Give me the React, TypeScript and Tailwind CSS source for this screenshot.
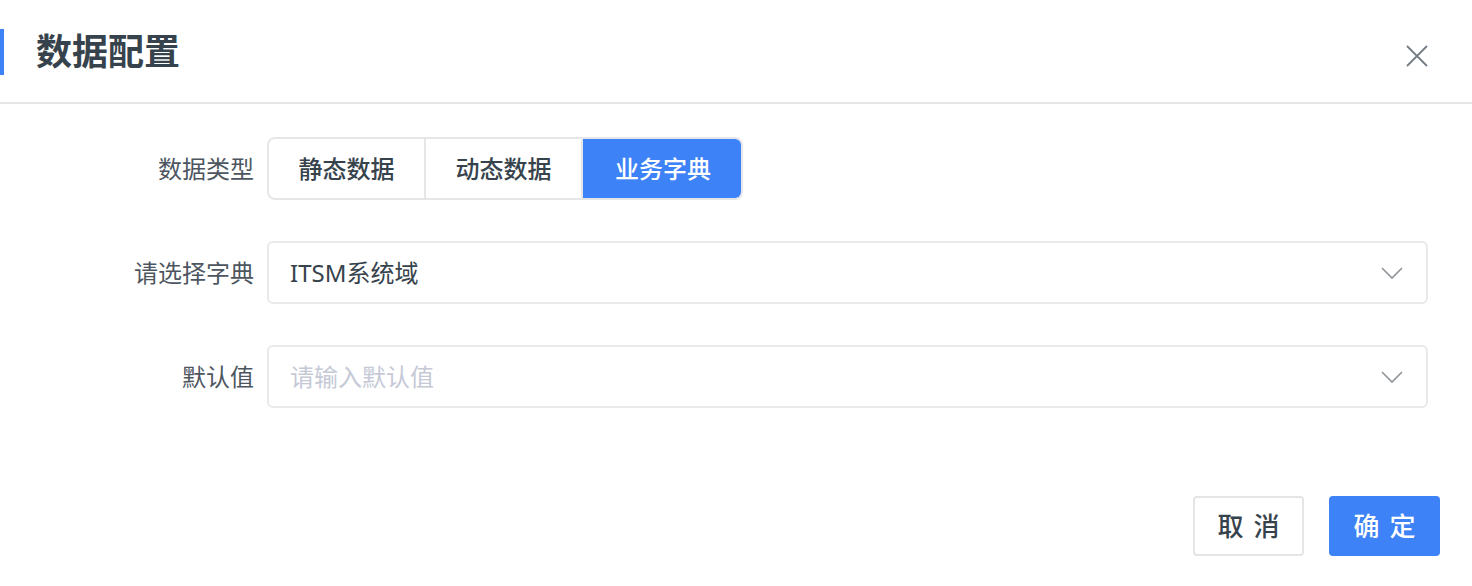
import { useState } from "react";

const types = ["静态数据", "动态数据", "业务字典"];

function Chevron() {
    return (
        <svg width="24" height="14" viewBox="0 0 24 14" fill="none" className="shrink-0">
            <path d="M2 2l10 10 10-10" stroke="#8f959c" strokeWidth="1.6" />
        </svg>
    );
}

function Row({ label, children }: { label: string; children: React.ReactNode }) {
    return (
        <div className="flex items-center gap-[13px]">
            <div className="w-[254px] text-right text-[24px] text-[#4d565f]">{label}</div>
            {children}
        </div>
    );
}

export default function App() {
    const [active, setActive] = useState(2);

    return (
        <div
            className="w-[1472px] h-[586px] bg-white flex flex-col"
            style={{ fontFamily: '"Noto Sans", "Noto Sans CJK SC", sans-serif' }}
        >
            <div className="h-[104px] border-b-2 border-[#e6e6e6] flex items-center pr-[44px]">
                <div className="w-[4px] h-[46px] bg-[#3d82f6] mr-[32px] mt-[2px]" />
                <h2 className="text-[36px] font-bold text-[#37434c] flex-1 mt-[2px]">数据配置</h2>
                <button className="text-[#747c85] mt-[9px]">
                    <svg width="22" height="22" viewBox="0 0 22 22">
                        <path d="M1 1l20 20M21 1L1 21" stroke="currentColor" strokeWidth="1.8" />
                    </svg>
                </button>
            </div>

            <div className="flex flex-col gap-[41px] pt-[33px] pr-[44px]">
                <Row label="数据类型">
                    <div className="flex h-[63px] rounded-[8px] border-2 border-[#e5e6e8] overflow-hidden">
                        {types.map((t, i) => (
                            <button
                                key={t}
                                onClick={() => setActive(i)}
                                className={
                                    i === active
                                        ? "w-[160px] bg-[#3d82f6] text-white text-[24px] font-medium -my-[2px] -mr-[2px]"
                                        : "w-[157px] text-[#37434c] text-[24px] font-medium border-r-2 border-[#e5e6e8]"
                                }
                            >
                                {t}
                            </button>
                        ))}
                    </div>
                </Row>

                <Row label="请选择字典">
                    <div className="flex-1 h-[63px] rounded-[6px] border-2 border-[#e8e9eb] flex items-center justify-between pl-[21px] pr-[22px]">
                        <span className="text-[24px] text-[#37434c]">ITSM系统域</span>
                        <Chevron />
                    </div>
                </Row>

                <Row label="默认值">
                    <div className="flex-1 h-[63px] rounded-[6px] border-2 border-[#e8e9eb] flex items-center justify-between pl-[21px] pr-[22px]">
                        <span className="text-[24px] text-[#c5c9d6]">请输入默认值</span>
                        <Chevron />
                    </div>
                </Row>
            </div>

            <div className="flex-1" />

            <div className="flex justify-end gap-[25px] pr-[32px] pb-[30px]">
                <button className="w-[111px] h-[60px] rounded-[4px] border-2 border-[#e4e5e7] text-[26px] font-medium tracking-[10px] pl-[10px] text-[#37434c]">
                    取消
                </button>
                <button className="w-[111px] h-[60px] rounded-[4px] bg-[#3d82f6] text-[26px] font-medium tracking-[10px] pl-[10px] text-white">
                    确定
                </button>
            </div>
        </div>
    );
}
